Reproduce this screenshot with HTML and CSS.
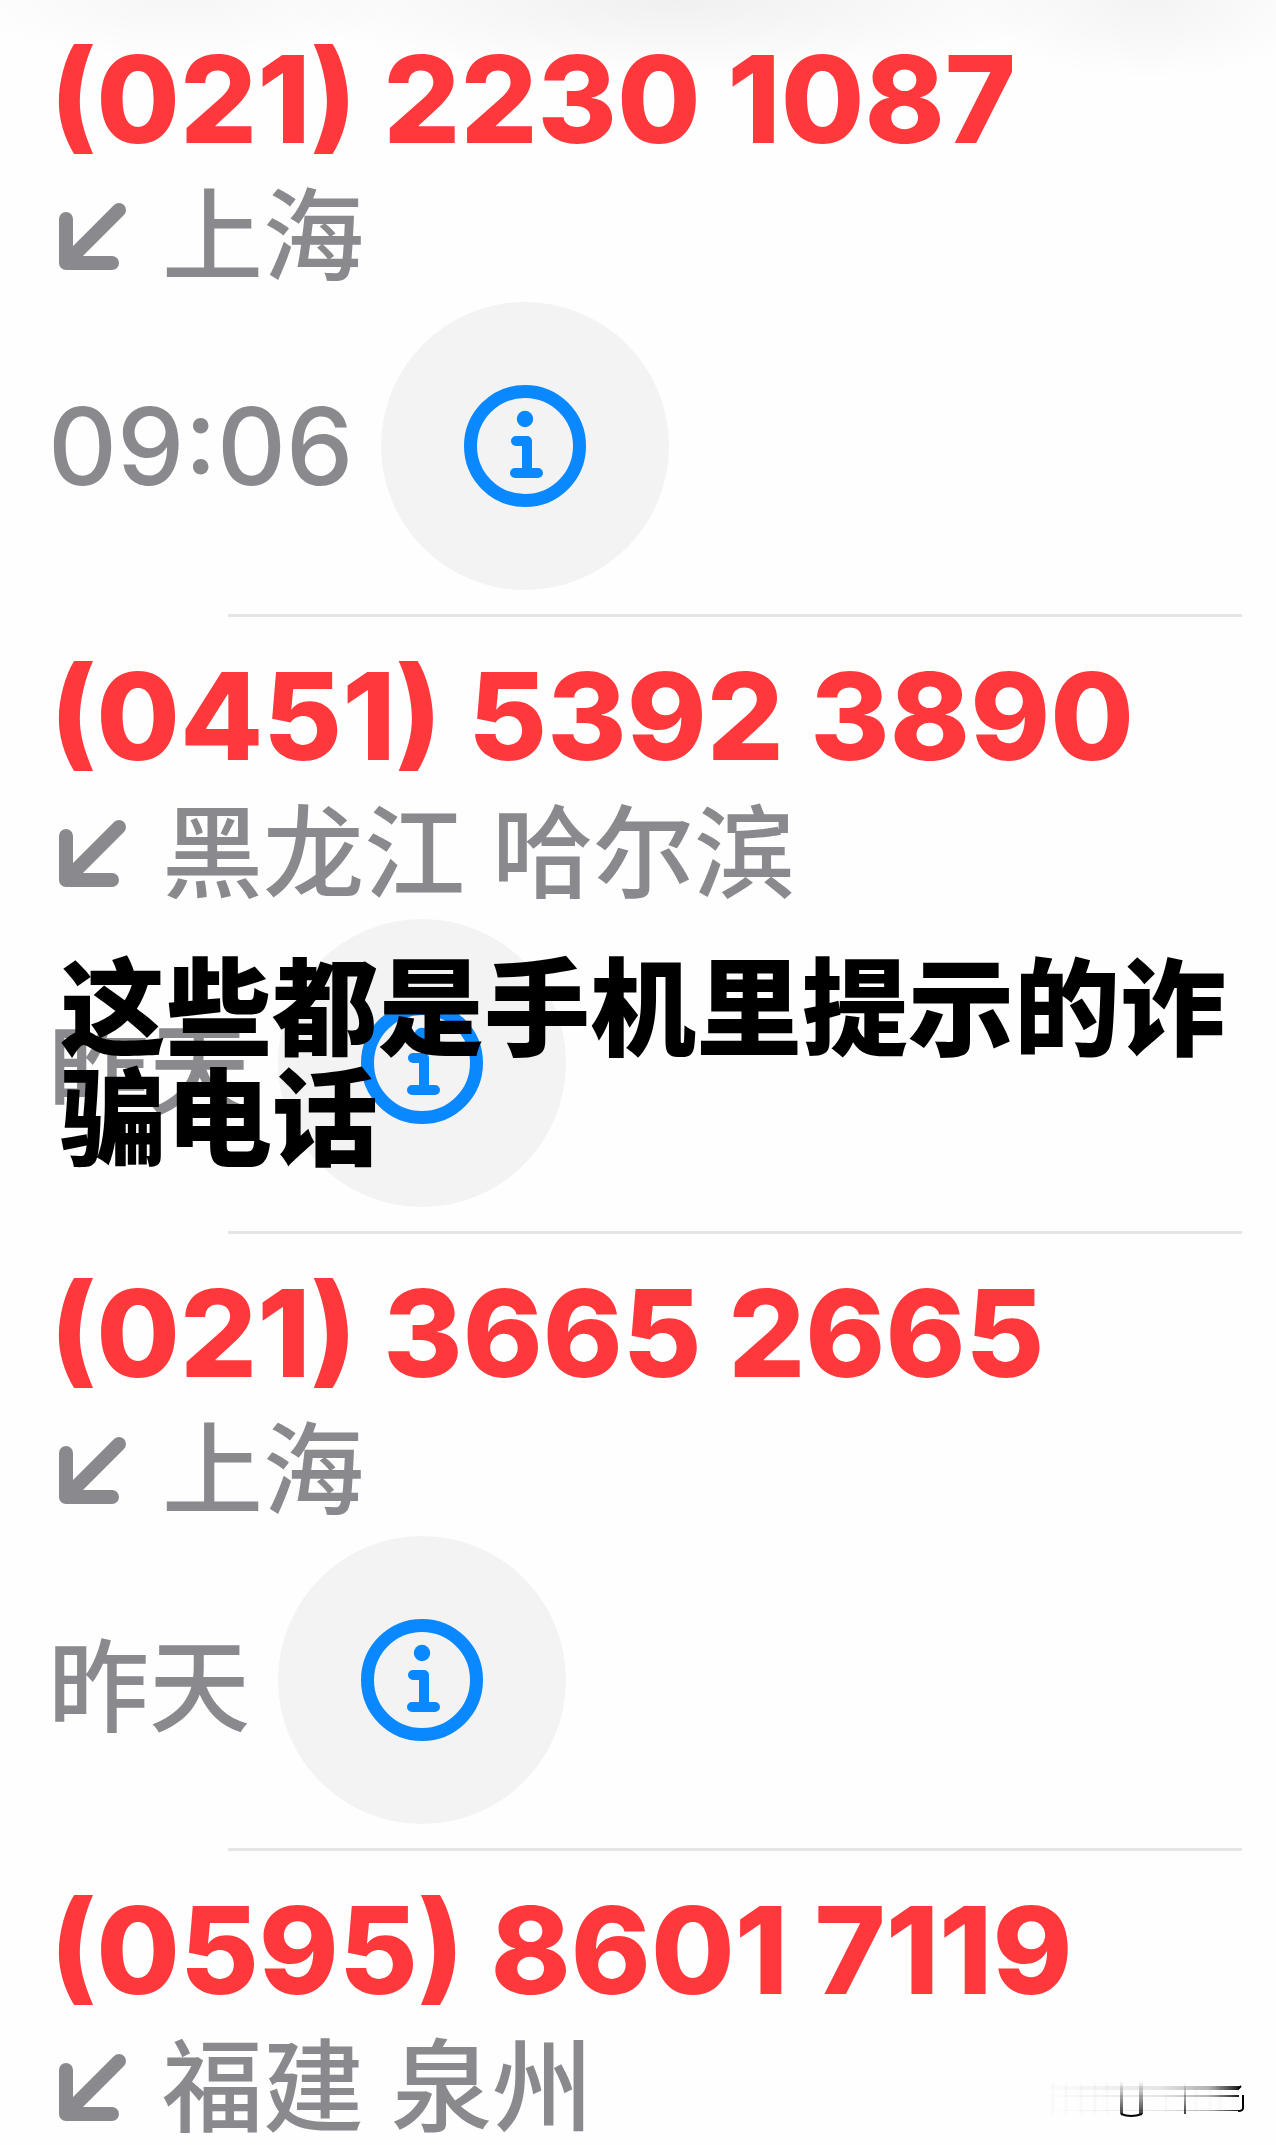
FILE: index.html
```html
<!DOCTYPE html>
<html lang="zh-CN">
<head>
    <meta charset="UTF-8">
    <meta name="viewport" content="width=device-width, initial-scale=1.0">
    <title>最近通话</title>
    <link rel="stylesheet" href="styles.css">
</head>
<body>

<!-- Shared icons -->
<svg class="icon-defs" aria-hidden="true">
    <symbol id="icon-incoming" viewBox="0 0 70 70">
        <path d="M8 18V62H54M8 62L61 9" fill="none" stroke="currentColor" stroke-width="14" stroke-linecap="round" stroke-linejoin="round"/>
    </symbol>
    <symbol id="icon-info" viewBox="0 0 122 122">
        <circle cx="61" cy="61" r="54.5" fill="none" stroke="currentColor" stroke-width="13"/>
        <circle cx="61" cy="34" r="8.2" fill="currentColor"/>
        <path d="M52 56H63V88M51 88H74" fill="none" stroke="currentColor" stroke-width="10" stroke-linecap="round" stroke-linejoin="round"/>
    </symbol>
</svg>

<main class="calls">
    <div class="top-shade"></div>

    <ul class="call-list">
        <li class="call">
            <div class="number">(021) 2230 1087</div>
            <div class="place"><svg class="incoming"><use href="#icon-incoming"/></svg>上海</div>
            <div class="details">
                <time class="clock">09:06</time>
                <button class="info" aria-label="详情"><svg><use href="#icon-info"/></svg></button>
            </div>
        </li>
        <li class="call">
            <div class="number">(0451) 5392 3890</div>
            <div class="place"><svg class="incoming"><use href="#icon-incoming"/></svg>黑龙江 哈尔滨</div>
            <div class="details">
                <time>昨天</time>
                <button class="info" aria-label="详情"><svg><use href="#icon-info"/></svg></button>
                <p class="caption">这些都是手机里提示的诈骗电话</p>
            </div>
        </li>
        <li class="call">
            <div class="number">(021) 3665 2665</div>
            <div class="place"><svg class="incoming"><use href="#icon-incoming"/></svg>上海</div>
            <div class="details">
                <time>昨天</time>
                <button class="info" aria-label="详情"><svg><use href="#icon-info"/></svg></button>
            </div>
        </li>
        <li class="call">
            <div class="number">(0595) 8601 7119</div>
            <div class="place"><svg class="incoming"><use href="#icon-incoming"/></svg>福建 泉州</div>
        </li>
    </ul>

    <!-- Faded mark in the corner -->
    <svg class="mark" viewBox="0 0 210 42" aria-hidden="true">
        <defs>
            <linearGradient id="fadeX">
                <stop offset="0" stop-color="#000" stop-opacity="0"/>
                <stop offset="0.6" stop-color="#000" stop-opacity="0.1"/>
                <stop offset="0.85" stop-color="#000" stop-opacity="0.3"/>
                <stop offset="1" stop-color="#000" stop-opacity="0.9"/>
            </linearGradient>
            <linearGradient id="fadeY" x2="0" y2="1">
                <stop offset="0" stop-color="#000" stop-opacity="0"/>
                <stop offset="1" stop-color="#000" stop-opacity="0.75"/>
            </linearGradient>
        </defs>
        <rect x="5" y="7" width="196" height="4" fill="url(#fadeX)"/>
        <rect x="5" y="16" width="196" height="2" fill="url(#fadeX)"/>
        <rect x="5" y="31" width="196" height="1" fill="url(#fadeX)"/>
        <rect x="82" y="2" width="3" height="33" fill="url(#fadeY)"/>
        <rect x="101" y="2" width="4" height="33" fill="url(#fadeY)"/>
        <rect x="146" y="4" width="2" height="31" fill="url(#fadeY)"/>
        <path d="M15 4V35M28 4V35M43 4V35M57 4V35M69 4V35M128 16V34M158 8V34M172 8V34M182 8V34" stroke="#000" stroke-opacity="0.02" stroke-width="3"/>
        <path d="M83 35Q93 39 104 35" fill="none" stroke="#000" stroke-width="2"/>
        <path d="M200 10L203 7M205 16V29Q205 32 200 32" fill="none" stroke="#000" stroke-width="2"/>
    </svg>
</main>

</body>
</html>
```

FILE: styles.css
```css
* {
    box-sizing: border-box;
}
body {
    margin: 0;
    background-color: #fefefe;
    font-family: Inter, "Noto Sans CJK SC", sans-serif;
}
.icon-defs {
    position: absolute;
    width: 0;
    height: 0;
}
.calls {
    position: relative;
    height: 100vh;
    overflow: hidden;
}
.top-shade {
    position: absolute;
    top: 0;
    left: 0;
    width: 100%;
    height: 90px;
    background:
        radial-gradient(ellipse 220px 60px at 14% 0, rgba(0, 0, 0, 0.03), transparent),
        radial-gradient(ellipse 400px 75px at 53% 0, rgba(0, 0, 0, 0.055), transparent),
        radial-gradient(ellipse 180px 80px at 90% 0, rgba(0, 0, 0, 0.045), transparent);
}
.call-list {
    position: relative;
    margin: 0;
    padding: 0;
    list-style: none;
}
.call {
    padding: 28px 34px 0 48px;
    color: #8a8a8e;
    font-size: 101px;
    font-weight: 500;
}
.call::after {
    content: "";
    display: block;
    height: 3px;
    margin-top: 24px;
    margin-left: 180px;
    background-color: #e5e5e5;
}
.number {
    padding-left: 2px;
    color: #ff383c;
    font-size: 121px;
    font-weight: 800;
    line-height: 142px;
    white-space: nowrap;
}
.place {
    display: flex;
    align-items: center;
    gap: 34px;
    height: 132px;
    line-height: 132px;
    white-space: nowrap;
}
.incoming {
    width: 70px;
    height: 70px;
    margin-left: 10px;
}
.details {
    position: relative;
    display: flex;
    align-items: center;
    gap: 28px;
}
.clock {
    font-size: 107px;
}
.info {
    display: flex;
    align-items: center;
    justify-content: center;
    width: 288px;
    height: 288px;
    padding: 0;
    border: none;
    border-radius: 50%;
    background-color: #f3f3f3;
    color: #0a88ff;
    cursor: pointer;
}
.info svg {
    width: 122px;
    height: 122px;
}
.caption {
    position: absolute;
    top: 27px;
    left: 12px;
    right: 0;
    margin: 0;
    color: #000;
    font-family: "Noto Sans CJK SC", sans-serif;
    font-size: 106px;
    font-weight: 900;
    line-height: 110px;
}
.mark {
    position: absolute;
    right: 28px;
    bottom: 24px;
    width: 210px;
    height: 42px;
}
```
